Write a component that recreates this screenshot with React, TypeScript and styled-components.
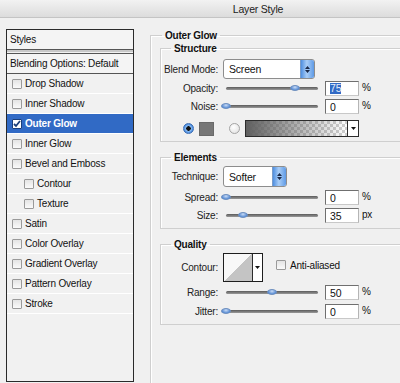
import React from 'react';
import styled, { createGlobalStyle } from 'styled-components';

const GlobalStyle = createGlobalStyle`
  html, body {
    margin: 0;
    padding: 0;
    background: #f0f0f0;
  }
  body {
    font-family: 'Liberation Sans', Arial, sans-serif;
    font-size: 10px;
    letter-spacing: -0.2px;
    color: #111;
  }
`;

const Window = styled.div`
  width: 400px;
  height: 383px;
  overflow: hidden;
  background: #f0f0f0;
  display: flex;
  flex-direction: column;
`;

const TitleBar = styled.div`
  height: 17px;
  flex: none;
  display: flex;
  align-items: center;
  justify-content: center;
  padding-left: 116px;
  background: linear-gradient(#f2f2f2, #dcdcdc);
  border-bottom: 1px solid #c4c4c4;
  font-size: 10.5px;
  color: #222;
`;

const Body = styled.div`
  display: flex;
  align-items: flex-start;
  padding: 11px 0 0 6px;
`;

/* ---------- left styles list ---------- */

const StylesPanel = styled.div`
  width: 126px;
  height: 351px;
  flex: none;
  border: 1px solid #2a2a2a;
  background: #f1f1f1;
`;

const PanelHeader = styled.div<{ $last?: boolean }>`
  height: 19px;
  display: flex;
  align-items: center;
  padding-left: 3px;
  background: #f4f4f4;
  border-bottom: 1px solid #555;
  ${(p) => (p.$last ? '' : 'margin-bottom: 3px; box-shadow: 0 1px 0 #c8c8c8, 0 2px 0 #c8c8c8;')}
  ${(p) => (p.$last ? 'border-top: 1px solid #555;' : '')}
`;

const StyleItem = styled.div<{ $active?: boolean; $indent?: boolean }>`
  height: 19px;
  display: flex;
  align-items: center;
  padding-left: ${(p) => (p.$indent ? 17 : 5)}px;
  border-bottom: 1px solid #fff;
  background: ${(p) => (p.$active ? '#316ac5' : 'transparent')};
  color: ${(p) => (p.$active ? '#fff' : '#111')};
  font-weight: ${(p) => (p.$active ? 700 : 400)};
  gap: 3px;
`;

const Check = styled.span<{ $checked?: boolean }>`
  width: 8px;
  height: 8px;
  flex: none;
  border: 1px solid ${(p) => (p.$checked ? '#1c3f7a' : '#9a9a9a')};
  border-radius: 1px;
  background: ${(p) => (p.$checked ? '#fff' : 'linear-gradient(#e4e4e4, #fafafa)')};
  position: relative;
  svg {
    position: absolute;
    left: 0;
    top: 0;
  }
`;

/* ---------- right settings ---------- */

const Group = styled.fieldset<{ $outer?: boolean }>`
  margin: 0 0 ${(p) => (p.$outer ? 0 : 9)}px 0;
  padding: 0 0 ${(p) => (p.$outer ? 0 : 5)}px ${(p) => (p.$outer ? 9 : 0)}px;
  border: 1px solid #cfcfcf;
  border-right: none;
  box-shadow: inset 1px 1px 0 #fff;
  min-width: 0;
  ${(p) => (p.$outer ? 'width: 300px; height: 420px; margin-left: 16px;' : '')}
`;

const Legend = styled.legend<{ $offset: number }>`
  font-weight: 700;
  padding: 0 3px;
  margin-left: ${(p) => p.$offset}px;
  line-height: 13px;
`;

const Row = styled.div<{ $h: number; $mt: number; $indent?: number }>`
  display: flex;
  align-items: center;
  height: ${(p) => p.$h}px;
  margin-top: ${(p) => p.$mt}px;
  padding-left: ${(p) => p.$indent ?? 0}px;
`;

const Label = styled.span`
  width: 57px;
  flex: none;
  text-align: right;
  margin-right: 5px;
  color: #222;
`;

const Select = styled.div<{ $w: number; $h: number }>`
  width: ${(p) => p.$w}px;
  height: ${(p) => p.$h}px;
  box-sizing: border-box;
  display: flex;
  align-items: center;
  border: 1px solid #8d8d8d;
  border-radius: 3px;
  background: #fff;
  padding-left: 5px;
  font-size: 10.5px;
  overflow: hidden;
`;

const SelectText = styled.span`
  flex: 1;
`;

const SpinButton = styled.span`
  width: 13px;
  align-self: stretch;
  background: linear-gradient(90deg, #4f8fe0, #a9cdf6 45%, #5e9ae6);
  border-left: 1px solid #7a9cc8;
  display: flex;
  align-items: center;
  justify-content: center;
`;

const Slider = styled.div<{ $value: number }>`
  width: 92px;
  height: 3px;
  margin-left: 3px;
  margin-right: 7px;
  border-radius: 2px;
  background: linear-gradient(#5a5a5a, #9a9a9a);
  position: relative;
  &::after {
    content: '';
    position: absolute;
    top: -2px;
    left: calc(${(p) => p.$value}% - 5px);
    width: 10px;
    height: 6px;
    border-radius: 50%;
    background: radial-gradient(ellipse at 50% 30%, #c9dcf6, #5c8ed4 70%);
    border: 1px solid #6e8fbf;
    box-sizing: border-box;
  }
`;

const NumField = styled.div`
  width: 34px;
  height: 15px;
  box-sizing: border-box;
  border: 1px solid #6f6f6f;
  border-right-color: #b5b5b5;
  border-bottom-color: #c8c8c8;
  background: #fff;
  display: flex;
  align-items: center;
  padding-left: 4px;
  font-size: 10.5px;
`;

const Selected = styled.span`
  background: #316ac5;
  color: #e8eefa;
  line-height: 11px;
`;

const Unit = styled.span`
  margin-left: 3px;
  margin-top: -2px;
`;

const Radio = styled.span<{ $on?: boolean }>`
  width: 11px;
  height: 11px;
  box-sizing: border-box;
  border-radius: 50%;
  flex: none;
  border: 1px solid ${(p) => (p.$on ? '#3d6fb4' : '#a4a4a4')};
  background: ${(p) =>
    p.$on
      ? 'radial-gradient(circle, #111 0 2px, #8ec0f4 2.5px, #3b7dd8 5px)'
      : 'radial-gradient(circle at 40% 35%, #fff, #dedede)'};
`;

const Swatch = styled.span`
  width: 15px;
  height: 14px;
  margin-left: 5px;
  margin-right: 15px;
  background: #777;
  border: 1px solid #6a6a6a;
  box-sizing: border-box;
`;

const GradientPicker = styled.div`
  display: flex;
  margin-left: 5px;
  height: 15px;
  border: 1px solid #2c2c2c;
`;

const GradientBar = styled.span`
  width: 101px;
  background-image: linear-gradient(90deg, #606060, rgba(96, 96, 96, 0.55) 45%, rgba(96, 96, 96, 0)),
    repeating-conic-gradient(#cfcfcf 0 25%, #fff 0 50%);
  background-size: 100% 100%, 6px 6px;
`;

const ArrowBox = styled.span<{ $w?: number }>`
  width: ${(p) => p.$w ?? 10}px;
  background: #fff;
  border-left: 1px solid #2c2c2c;
  display: flex;
  align-items: center;
  justify-content: center;
`;

const ContourBox = styled.div`
  display: flex;
  height: 29px;
  border: 1px solid #1e1e1e;
  box-sizing: border-box;
  background: #fff;
`;

const ContourPreview = styled.span`
  width: 28px;
  background: linear-gradient(to top left, #c4c4c4 50%, #f8f8f8 50%);
`;

const CheckLabel = styled.span`
  margin-left: 13px;
  display: flex;
  align-items: center;
  gap: 4px;
  margin-top: -5px;
`;

const Sections = styled.div`
  width: 300px;
`;

const DownArrow = () => (
  <svg width="5" height="3" viewBox="0 0 5 3">
    <path d="M0 0h5L2.5 3z" fill="#111" />
  </svg>
);

const UpDown = () => (
  <svg width="5" height="9" viewBox="0 0 5 9">
    <path d="M0 4h5L2.5 1z M0 5h5L2.5 8z" fill="#1a2a4a" />
  </svg>
);

const styleItems = [
  { name: 'Drop Shadow' },
  { name: 'Inner Shadow' },
  { name: 'Outer Glow', active: true },
  { name: 'Inner Glow' },
  { name: 'Bevel and Emboss' },
  { name: 'Contour', indent: true },
  { name: 'Texture', indent: true },
  { name: 'Satin' },
  { name: 'Color Overlay' },
  { name: 'Gradient Overlay' },
  { name: 'Pattern Overlay' },
  { name: 'Stroke' },
];

const App = () => {
  return (
    <Window>
      <GlobalStyle />
      <TitleBar>Layer Style</TitleBar>
      <Body>
        <StylesPanel>
          <PanelHeader>Styles</PanelHeader>
          <PanelHeader $last>Blending Options: Default</PanelHeader>
          {styleItems.map((item) => (
            <StyleItem key={item.name} $active={item.active} $indent={item.indent}>
              <Check $checked={item.active}>
                {item.active && (
                  <svg width="8" height="8" viewBox="0 0 8 8">
                    <path d="M1 4l2 2 4-5" stroke="#1c3f7a" strokeWidth="1.8" fill="none" />
                  </svg>
                )}
              </Check>
              {item.name}
            </StyleItem>
          ))}
        </StylesPanel>

        <Group $outer>
          <Legend $offset={2}>Outer Glow</Legend>
          <Sections>
            <Group>
              <Legend $offset={10}>Structure</Legend>
              <Row $h={20} $mt={4}>
                <Label>Blend Mode:</Label>
                <Select $w={92} $h={20}>
                  <SelectText>Screen</SelectText>
                  <SpinButton>
                    <UpDown />
                  </SpinButton>
                </Select>
              </Row>
              <Row $h={15} $mt={2}>
                <Label>Opacity:</Label>
                <Slider $value={75} />
                <NumField>
                  <Selected>75</Selected>
                </NumField>
                <Unit>%</Unit>
              </Row>
              <Row $h={15} $mt={3}>
                <Label>Noise:</Label>
                <Slider $value={0} />
                <NumField>0</NumField>
                <Unit>%</Unit>
              </Row>
              <Row $h={15} $mt={7} $indent={22}>
                <Radio $on />
                <Swatch />
                <Radio />
                <GradientPicker>
                  <GradientBar />
                  <ArrowBox>
                    <DownArrow />
                  </ArrowBox>
                </GradientPicker>
              </Row>
            </Group>

            <Group>
              <Legend $offset={10}>Elements</Legend>
              <Row $h={21} $mt={2}>
                <Label>Technique:</Label>
                <Select $w={64} $h={21}>
                  <SelectText>Softer</SelectText>
                  <SpinButton>
                    <UpDown />
                  </SpinButton>
                </Select>
              </Row>
              <Row $h={15} $mt={3}>
                <Label>Spread:</Label>
                <Slider $value={0} />
                <NumField>0</NumField>
                <Unit>%</Unit>
              </Row>
              <Row $h={15} $mt={3}>
                <Label>Size:</Label>
                <Slider $value={18} />
                <NumField>35</NumField>
                <Unit>px</Unit>
              </Row>
            </Group>

            <Group>
              <Legend $offset={10}>Quality</Legend>
              <Row $h={29} $mt={2}>
                <Label>Contour:</Label>
                <ContourBox>
                  <ContourPreview />
                  <ArrowBox $w={9}>
                    <DownArrow />
                  </ArrowBox>
                </ContourBox>
                <CheckLabel>
                  <Check />
                  Anti-aliased
                </CheckLabel>
              </Row>
              <Row $h={15} $mt={3}>
                <Label>Range:</Label>
                <Slider $value={50} />
                <NumField>50</NumField>
                <Unit>%</Unit>
              </Row>
              <Row $h={15} $mt={4}>
                <Label>Jitter:</Label>
                <Slider $value={0} />
                <NumField>0</NumField>
                <Unit>%</Unit>
              </Row>
            </Group>
          </Sections>
        </Group>
      </Body>
    </Window>
  );
};

export default App;
